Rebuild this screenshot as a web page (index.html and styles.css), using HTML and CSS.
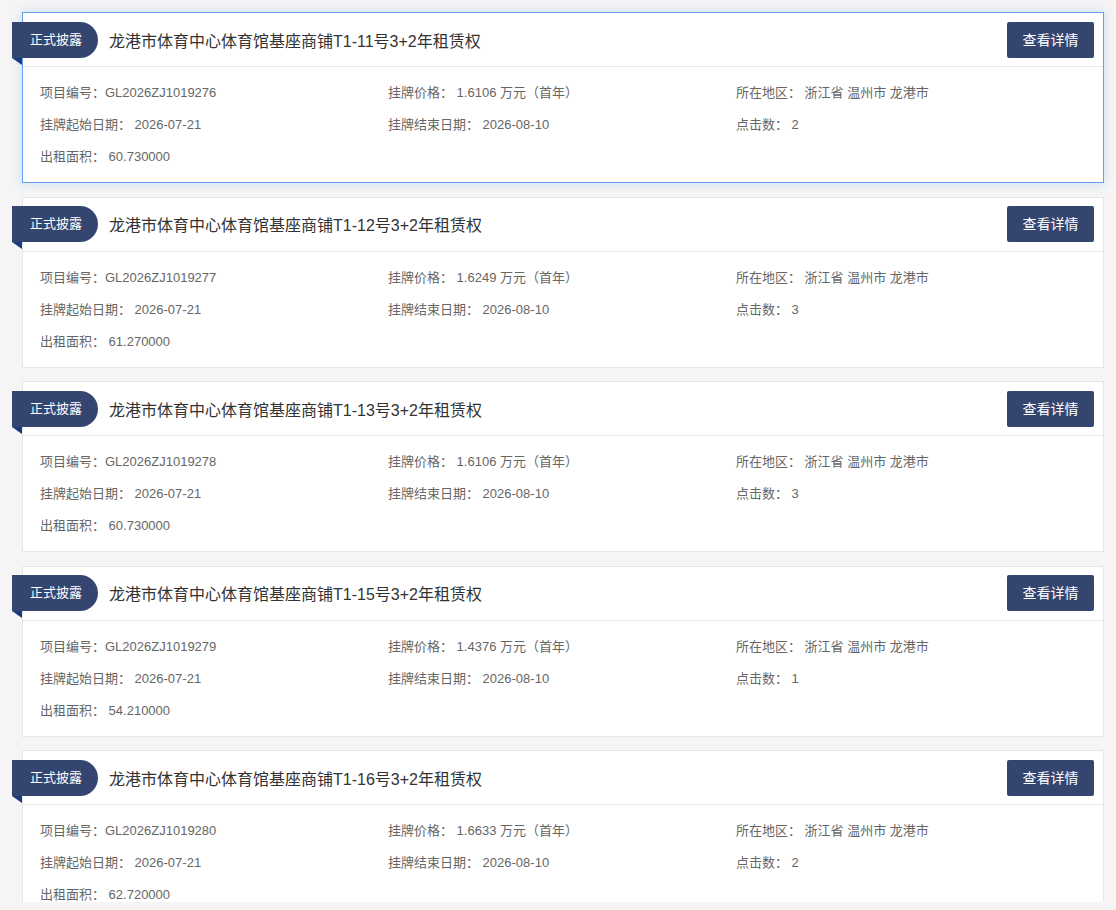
FILE: index.html
```html
<!DOCTYPE html>
<html lang="zh-CN">
<head>
<meta charset="utf-8">
<title>项目列表</title>
<link rel="stylesheet" href="styles.css">
</head>
<body>
<div class="page">
  <div class="list">
    <div class="card active">
      <div class="card-head">
        <span class="badge">正式披露</span>
        <span class="title">龙港市体育中心体育馆基座商铺T1-11号3+2年租赁权</span>
        <a class="btn">查看详情</a>
      </div>
      <div class="card-body">
        <div class="item">项目编号：GL2026ZJ1019276</div>
        <div class="item">挂牌价格： 1.6106 万元（首年）</div>
        <div class="item">所在地区： 浙江省 温州市 龙港市</div>
        <div class="item">挂牌起始日期： 2026-07-21</div>
        <div class="item">挂牌结束日期： 2026-08-10</div>
        <div class="item">点击数： 2</div>
        <div class="item">出租面积： 60.730000</div>
      </div>
    </div>
    <div class="card">
      <div class="card-head">
        <span class="badge">正式披露</span>
        <span class="title">龙港市体育中心体育馆基座商铺T1-12号3+2年租赁权</span>
        <a class="btn">查看详情</a>
      </div>
      <div class="card-body">
        <div class="item">项目编号：GL2026ZJ1019277</div>
        <div class="item">挂牌价格： 1.6249 万元（首年）</div>
        <div class="item">所在地区： 浙江省 温州市 龙港市</div>
        <div class="item">挂牌起始日期： 2026-07-21</div>
        <div class="item">挂牌结束日期： 2026-08-10</div>
        <div class="item">点击数： 3</div>
        <div class="item">出租面积： 61.270000</div>
      </div>
    </div>
    <div class="card">
      <div class="card-head">
        <span class="badge">正式披露</span>
        <span class="title">龙港市体育中心体育馆基座商铺T1-13号3+2年租赁权</span>
        <a class="btn">查看详情</a>
      </div>
      <div class="card-body">
        <div class="item">项目编号：GL2026ZJ1019278</div>
        <div class="item">挂牌价格： 1.6106 万元（首年）</div>
        <div class="item">所在地区： 浙江省 温州市 龙港市</div>
        <div class="item">挂牌起始日期： 2026-07-21</div>
        <div class="item">挂牌结束日期： 2026-08-10</div>
        <div class="item">点击数： 3</div>
        <div class="item">出租面积： 60.730000</div>
      </div>
    </div>
    <div class="card">
      <div class="card-head">
        <span class="badge">正式披露</span>
        <span class="title">龙港市体育中心体育馆基座商铺T1-15号3+2年租赁权</span>
        <a class="btn">查看详情</a>
      </div>
      <div class="card-body">
        <div class="item">项目编号：GL2026ZJ1019279</div>
        <div class="item">挂牌价格： 1.4376 万元（首年）</div>
        <div class="item">所在地区： 浙江省 温州市 龙港市</div>
        <div class="item">挂牌起始日期： 2026-07-21</div>
        <div class="item">挂牌结束日期： 2026-08-10</div>
        <div class="item">点击数： 1</div>
        <div class="item">出租面积： 54.210000</div>
      </div>
    </div>
    <div class="card">
      <div class="card-head">
        <span class="badge">正式披露</span>
        <span class="title">龙港市体育中心体育馆基座商铺T1-16号3+2年租赁权</span>
        <a class="btn">查看详情</a>
      </div>
      <div class="card-body">
        <div class="item">项目编号：GL2026ZJ1019280</div>
        <div class="item">挂牌价格： 1.6633 万元（首年）</div>
        <div class="item">所在地区： 浙江省 温州市 龙港市</div>
        <div class="item">挂牌起始日期： 2026-07-21</div>
        <div class="item">挂牌结束日期： 2026-08-10</div>
        <div class="item">点击数： 2</div>
        <div class="item">出租面积： 62.720000</div>
      </div>
    </div>
  </div>
</div>
</body>
</html>
```
FILE: styles.css
```css
* { box-sizing: border-box; }
html, body {
  margin: 0;
  padding: 0;
  background: #f5f5f5;
  font-family: "Liberation Sans", "Noto Sans CJK SC", sans-serif;
}
.page {
  height: 910px;
  overflow: hidden;
}
.list {
  height: 902px;
  overflow: hidden;
  padding: 12px 12px 0 22px;
}
.card {
  background: #fff;
  border: 1px solid #e6e6e6;
  height: 171px;
  margin-bottom: 13.5px;
}
.card.active {
  border-color: #62a0ef;
  box-shadow: 0 0 10px rgba(64, 140, 240, 0.25);
}
.card-head {
  height: 54px;
  display: flex;
  align-items: center;
  padding-right: 9px;
  border-bottom: 1px solid #e6e6e6;
  position: relative;
}
.badge {
  position: relative;
  margin-left: -11px;
  height: 36px;
  width: 86px;
  line-height: 36px;
  padding-left: 18px;
  background: #34466f;
  color: #fff;
  font-size: 13px;
  border-radius: 0 18px 18px 0;
}
.badge::after {
  content: "";
  position: absolute;
  left: 0;
  top: 36px;
  width: 0;
  height: 0;
  border-top: 7px solid #1c3b7e;
  border-left: 10px solid transparent;
}
.title {
  flex: 1;
  margin-left: 11px;
  font-size: 16px;
  color: #333;
}
.btn {
  width: 87px;
  height: 36px;
  line-height: 36px;
  text-align: center;
  background: #34466f;
  color: #fff;
  font-size: 14px;
  border-radius: 2px;
}
.card-body {
  display: grid;
  grid-template-columns: repeat(3, 348px);
  grid-auto-rows: 32px;
  padding: 10px 19px 8px 17px;
}
.item {
  font-size: 13px;
  line-height: 32px;
  color: #666;
  white-space: nowrap;
}
```
